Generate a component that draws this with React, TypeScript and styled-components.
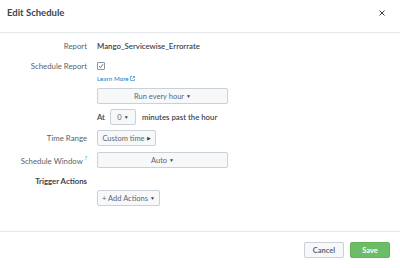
import styled, { createGlobalStyle } from "styled-components";

const Global = createGlobalStyle`
  html, body { margin: 0; padding: 0; background: #fff; }
  body { font-family: "Lato", "Liberation Sans", sans-serif; color: #3c444d; }
  * { box-sizing: border-box; }
`;

const Dialog = styled.div`
  width: 400px;
  height: 268px;
  display: flex;
  flex-direction: column;
  background: #fff;
`;

const Header = styled.div`
  height: 33px;
  border-bottom: 1px solid #e6e9ec;
  display: flex;
  align-items: center;
  justify-content: space-between;
  padding: 0 15px 7px 7px;
`;

const Title = styled.div`
  font-size: 9.5px;
  font-weight: 700;
  color: #3c444d;
`;

const Body = styled.div`
  flex: 1;
  display: flex;
  flex-direction: column;
  padding-top: 5px;
`;

const Row = styled.div<{ $mt: number; $h?: number }>`
  display: flex;
  align-items: center;
  margin-top: ${(p) => p.$mt}px;
  height: ${(p) => p.$h ?? 16}px;
`;

const Label = styled.div<{ $bold?: boolean }>`
  width: 87px;
  text-align: right;
  font-size: 7.8px;
  color: ${(p) => (p.$bold ? "#3c444d" : "#5a5f66")};
  font-weight: ${(p) => (p.$bold ? 700 : 400)};
  margin-right: 10px;
  white-space: nowrap;
`;

const Value = styled.div`
  font-size: 7.8px;
  color: #3c444d;
  font-weight: 600;
`;

const Help = styled.sup`
  font-size: 5px;
  color: #1a7ac4;
  margin-left: 2px;
`;

const Check = styled.div`
  width: 8px;
  height: 8px;
  border: 1px solid #8c949c;
  border-radius: 1px;
  display: flex;
  align-items: center;
  justify-content: center;
`;

const Link = styled.a`
  font-size: 6.3px;
  color: #1a7ac4;
  text-decoration: none;
  display: flex;
  align-items: center;
  gap: 1px;
`;

const Btn = styled.div<{ $w: number }>`
  width: ${(p) => p.$w}px;
  height: 16px;
  background: #f7f8fa;
  border: 1px solid #c9d0d7;
  border-radius: 2px;
  display: flex;
  align-items: center;
  justify-content: center;
  font-size: 7.5px;
  color: #5c6773;
  gap: 2px;
`;

const Caret = styled.span`
  font-size: 5px;
  color: #3c444d;
`;

const Inline = styled.span<{ $ml?: number; $bold?: boolean }>`
  font-size: 7.8px;
  color: #3c444d;
  font-weight: ${(p) => (p.$bold ? 600 : 400)};
  margin-left: ${(p) => p.$ml ?? 0}px;
  margin-right: 5px;
`;

const Footer = styled.div`
  height: 37px;
  border-top: 1px solid #e6e9ec;
  display: flex;
  justify-content: flex-end;
  align-items: flex-start;
  gap: 6px;
  padding: 10px 10px 0 0;
`;

const FootBtn = styled.div<{ $primary?: boolean }>`
  width: 40px;
  height: 16px;
  border-radius: 2px;
  display: flex;
  align-items: center;
  justify-content: center;
  font-size: 7.5px;
  font-weight: 700;
  background: ${(p) => (p.$primary ? "#6cbd66" : "#f7f8fa")};
  border: 1px solid ${(p) => (p.$primary ? "#62b35c" : "#c9d0d7")};
  color: ${(p) => (p.$primary ? "#fff" : "#5c6773")};
`;

const Spacer = styled.div`
  width: 97px;
`;

export default function App() {
  return (
    <>
      <Global />
      <Dialog>
        <Header>
          <Title>Edit Schedule</Title>
          <svg width="6" height="6" viewBox="0 0 6 6">
            <path d="M0.5 0.5 L5.5 5.5 M5.5 0.5 L0.5 5.5" stroke="#3c444d" strokeWidth="1" />
          </svg>
        </Header>
        <Body>
          <Row $mt={0}>
            <Label>Report</Label>
            <Value>Mango_Servicewise_Errorrate</Value>
          </Row>
          <Row $mt={4}>
            <Label>Schedule Report</Label>
            <Check>
              <svg width="6" height="6" viewBox="0 0 6 6">
                <path d="M1 3.2 L2.5 4.6 L5 1.2" stroke="#3c444d" strokeWidth="0.8" fill="none" />
              </svg>
            </Check>
          </Row>
          <Row $mt={0} $h={8}>
            <Spacer />
            <Link>
              Learn More
              <svg width="5" height="5" viewBox="0 0 10 10">
                <path d="M4 1H1v8h8V6M6 1h3v3M9 1 4.5 5.5" stroke="#1a7ac4" strokeWidth="1.2" fill="none" />
              </svg>
            </Link>
          </Row>
          <Row $mt={6}>
            <Spacer />
            <Btn $w={131}>
              Run every hour <Caret>▼</Caret>
            </Btn>
          </Row>
          <Row $mt={5}>
            <Spacer />
            <Inline $bold>At</Inline>
            <Btn $w={26}>
              0 <Caret>▼</Caret>
            </Btn>
            <Inline $bold $ml={6}>minutes past the hour</Inline>
          </Row>
          <Row $mt={5}>
            <Label>Time Range</Label>
            <Btn $w={59}>
              Custom time <Caret>▶</Caret>
            </Btn>
          </Row>
          <Row $mt={6}>
            <Label>
              Schedule Window<Help>?</Help>
            </Label>
            <Btn $w={131}>
              Auto <Caret>▼</Caret>
            </Btn>
          </Row>
          <Row $mt={5}>
            <Label $bold>Trigger Actions</Label>
          </Row>
          <Row $mt={1}>
            <Spacer />
            <Btn $w={63}>
              + Add Actions <Caret>▼</Caret>
            </Btn>
          </Row>
        </Body>
        <Footer>
          <FootBtn>Cancel</FootBtn>
          <FootBtn $primary>Save</FootBtn>
        </Footer>
      </Dialog>
    </>
  );
}
